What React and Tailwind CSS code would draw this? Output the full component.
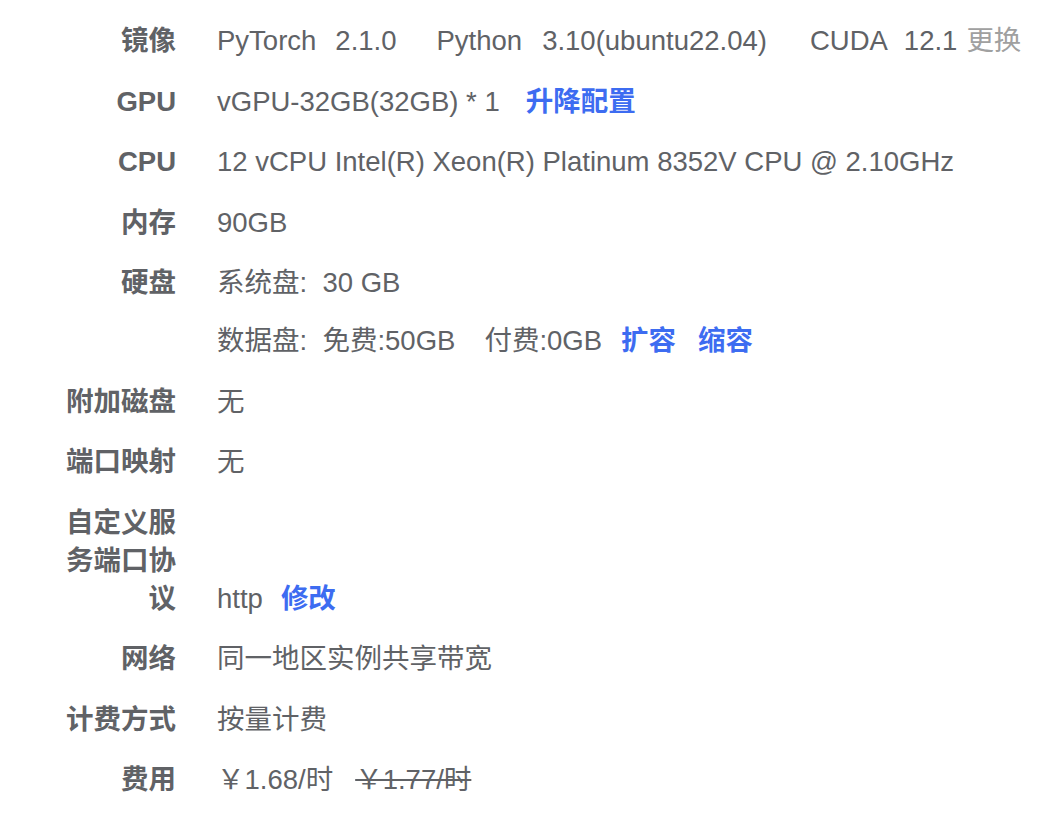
const rows = [
  {
    label: "镜像",
    value: (
      <>
        <span>PyTorch</span>
        <span className="ml-[19px]">2.1.0</span>
        <span className="ml-[40px]">Python</span>
        <span className="ml-[20px]">3.10(ubuntu22.04)</span>
        <span className="ml-[43px]">CUDA</span>
        <span className="ml-[16px]">12.1</span>
        <span className="ml-[9px] text-[#a0a0a0]">更换</span>
      </>
    ),
  },
  {
    label: "GPU",
    value: (
      <>
        <span>vGPU-32GB(32GB) * 1</span>
        <span className="ml-[26px] font-semibold text-[#3d6cf1]">升降配置</span>
      </>
    ),
  },
  {
    label: "CPU",
    value: "12 vCPU Intel(R) Xeon(R) Platinum 8352V CPU @ 2.10GHz",
  },
  { label: "内存", value: "90GB" },
  {
    label: "硬盘",
    top: true,
    value: (
      <div className="flex flex-col gap-[20px]">
        <span>系统盘:&nbsp; 30 GB</span>
        <div>
          <span>数据盘:&nbsp; 免费:50GB</span>
          <span className="ml-[29px]">付费:0GB</span>
          <span className="ml-[19px] font-semibold text-[#3d6cf1]">扩容</span>
          <span className="ml-[22px] font-semibold text-[#3d6cf1]">缩容</span>
        </div>
      </div>
    ),
  },
  { label: "附加磁盘", value: "无" },
  { label: "端口映射", value: "无" },
  {
    label: "自定义服务端口协议",
    value: (
      <>
        <span>http</span>
        <span className="ml-[18px] font-semibold text-[#3d6cf1]">修改</span>
      </>
    ),
  },
  { label: "网络", value: "同一地区实例共享带宽" },
  { label: "计费方式", value: "按量计费" },
  {
    label: "费用",
    value: (
      <>
        <span>￥1.68/时</span>
        <span className="ml-[22px] line-through">￥1.77/时</span>
      </>
    ),
  },
];

const App = () => {
  return (
    <div
      className="min-h-[820px] w-[1064px] bg-white pl-[56px] pt-[22px] text-[27.5px] leading-[38px] text-[#606266]"
      style={{ fontFamily: '"Liberation Sans", "Noto Sans CJK SC", sans-serif' }}
    >
      <div className="flex flex-col gap-[22.5px]">
        {rows.map((row, index) => (
          <div
            className={row.top ? "flex items-start" : "flex items-end"}
            key={index}
          >
            <div className="w-[120px] shrink-0 text-right font-semibold">
              {row.label}
            </div>
            <div className="ml-[41px] whitespace-nowrap">{row.value}</div>
          </div>
        ))}
      </div>
    </div>
  );
};

export default App;
